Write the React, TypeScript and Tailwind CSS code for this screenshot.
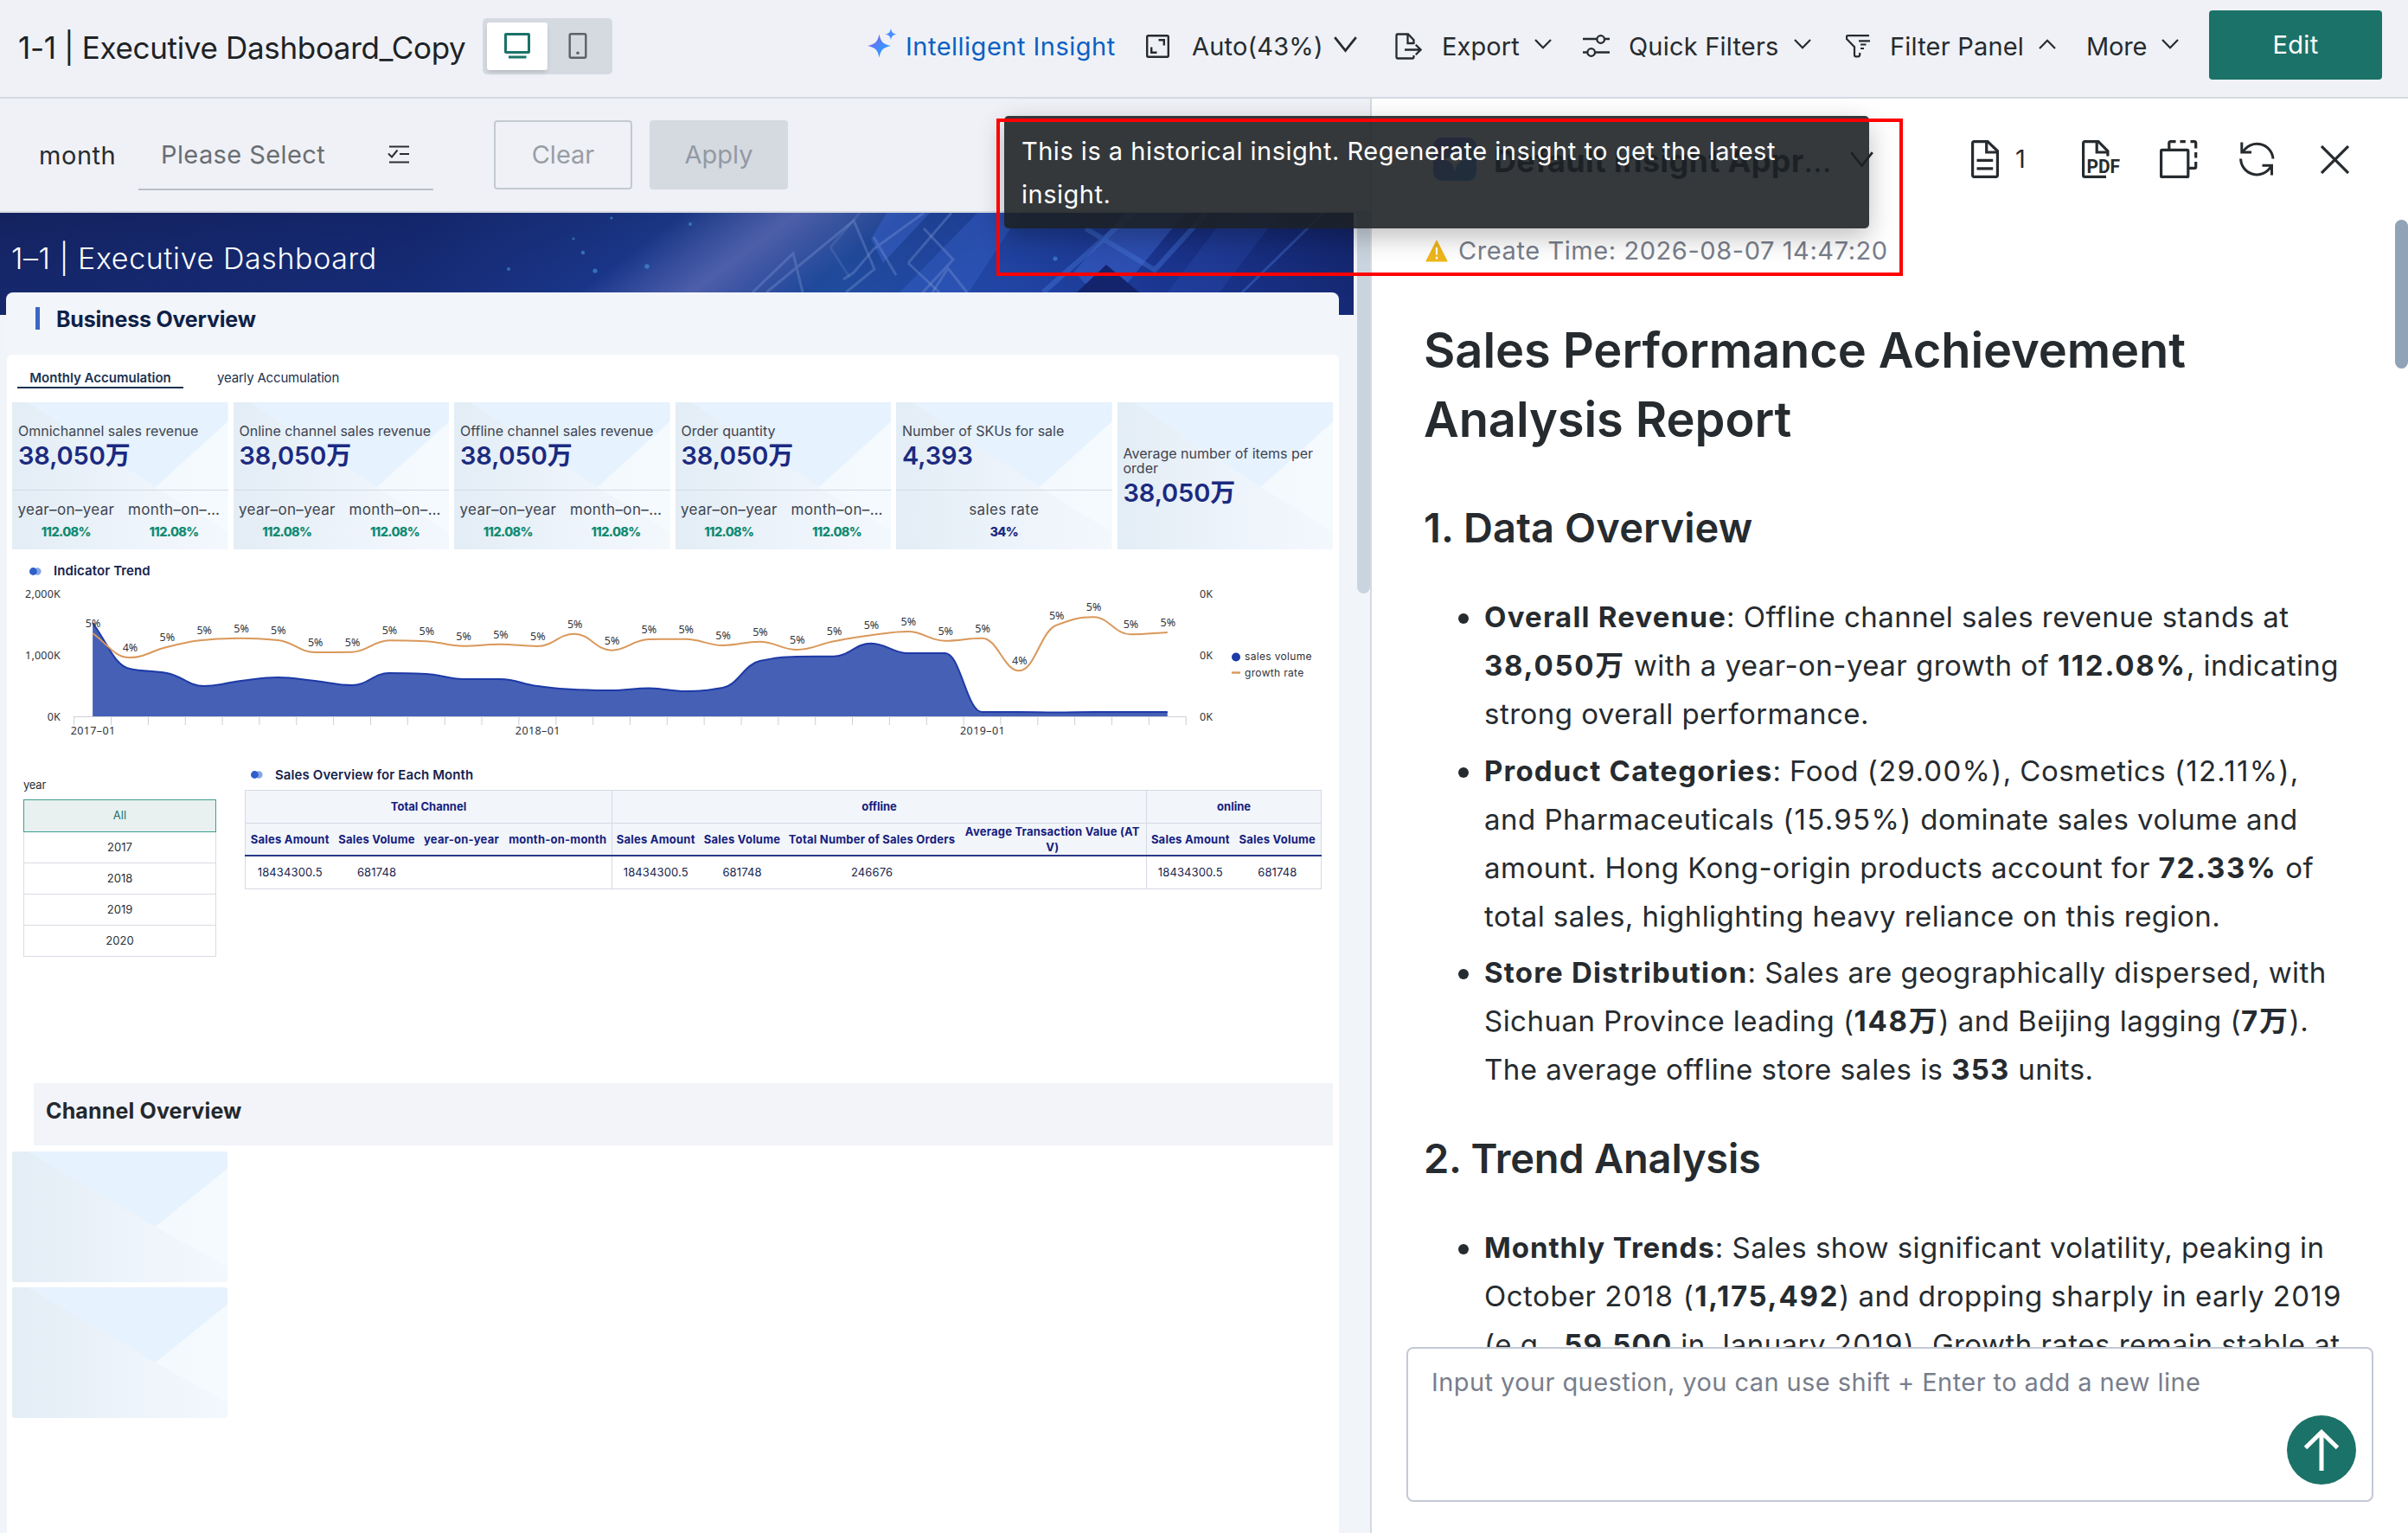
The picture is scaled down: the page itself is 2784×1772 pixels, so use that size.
import React from 'react';
import clsx from 'clsx';

type IconProps = { className?: string };

const Chevron = ({ up, className }: IconProps & { up?: boolean }) => (
  <svg width="20" height="12" viewBox="0 0 20 12" fill="none" stroke="currentColor" strokeWidth="2.2" className={className}>
    <path d={up ? 'M1 11 10 1.8 19 11' : 'M1 1 10 10.2 19 1'} />
  </svg>
);

const BigChevron = ({ className }: IconProps) => (
  <svg width="27" height="19" viewBox="0 0 27 19" fill="none" stroke="currentColor" strokeWidth="2.8" className={className}>
    <path d="M1.2 1.2 13.5 16.6 25.8 1.2" />
  </svg>
);

const MonitorIcon = () => (
  <svg width="30" height="30" viewBox="0 0 30 30" fill="none" stroke="#1b7268" strokeWidth="3">
    <rect x="1.5" y="1.5" width="27" height="21" rx="0.5" />
    <path d="M5 28h20.5" />
  </svg>
);

const PhoneIcon = () => (
  <svg width="22" height="30" viewBox="0 0 22 30" fill="none" stroke="#5d6166" strokeWidth="2.4">
    <rect x="1.7" y="1.2" width="18.6" height="27.6" rx="1.5" />
    <circle cx="11" cy="23.2" r="1.8" fill="#5d6166" stroke="none" />
  </svg>
);

const SparkleIcon = () => (
  <svg width="34" height="34" viewBox="0 0 34 34">
    <defs>
      <linearGradient id="sparkle" x1="0" y1="0" x2="1" y2="1">
        <stop offset="0.2" stopColor="#7b66ee" />
        <stop offset="0.6" stopColor="#3b93ff" />
      </linearGradient>
    </defs>
    <path d="M13.5 6.5C15.5 15.8 18 18 27 20c-9 2-11.500 4.200-13.500 13.500C11.500 24.200 9 22 0 20c9-2 11.500-4.200 13.500-13.500Z" fill="url(#sparkle)" />
    <path d="M27 0c1 4.600 2.400 5.900 7 6.600-4.600.8-6 2.100-7 6.600-1-4.500-2.400-5.800-7-6.600 4.600-.7 6-2 7-6.600Z" fill="#4c8dff" />
  </svg>
);

const FitIcon = () => (
  <svg width="27" height="27" viewBox="0 0 27 27" fill="none" stroke="currentColor" strokeWidth="2.4">
    <rect x="1.2" y="1.2" width="24.6" height="24.6" rx="1.5" />
    <path d="M14.5 6.2h6.3v6.3M12.5 20.8H6.2v-6.3" />
  </svg>
);

const ExportIcon = () => (
  <svg width="31" height="31" viewBox="0 0 31 31" fill="none" stroke="currentColor" strokeWidth="2.3">
    <path d="M21.5 13V8.200L15 1.500H2.800A1.300 1.300 0 0 0 1.500 2.800v25.400a1.300 1.300 0 0 0 1.300 1.300h17.400a1.300 1.300 0 0 0 1.300-1.300V26" />
    <path d="M14.5 1.500V12h7M11 19.500h18M23.800 13.800l5.700 5.700-5.700 5.700" />
  </svg>
);

const SlidersIcon = () => (
  <svg width="32" height="27" viewBox="0 0 32 27" fill="none" stroke="currentColor" strokeWidth="2.3">
    <path d="M0 5h16M25.500 5H31M0 20.500h5M14.500 20.500H31" />
    <circle cx="20.7" cy="5.5" r="4.3" />
    <circle cx="9.7" cy="20.500" r="4.3" />
  </svg>
);

const FilterIcon = () => (
  <svg width="28" height="27" viewBox="0 0 28 27" fill="none" stroke="currentColor" strokeWidth="2.2">
    <path d="M27 1.200H2A1 1 0 0 0 1 2.200V5l9 9.200V23.500a1.800 1.800 0 0 0 1.800 1.800h2.400a2 2 0 0 0 2-2V21" />
    <path d="M15 7.300h13M17 11.500h6.500M17 16h4" />
  </svg>
);

const ChecklistIcon = () => (
  <svg width="26" height="21" viewBox="0 0 26 21" fill="none" stroke="#2b2f33" strokeWidth="2">
    <path d="M2 1.500h23M14 10h11M2 19.500h23M1 9.500l4 4 6.500-8" />
  </svg>
);

const DocIcon = () => (
  <svg width="32" height="44" viewBox="0 0 32 44" fill="none" stroke="currentColor" strokeWidth="3.2">
    <path d="M19 1.600H3.200A1.600 1.600 0 0 0 1.600 3.200v37.600a1.600 1.600 0 0 0 1.600 1.600h25.600a1.600 1.600 0 0 0 1.600-1.600V12.500Z" />
    <path d="M17.700 1.600V14h12.700M6.500 23.300h18.700M6.500 32.800h18.700" />
  </svg>
);

const PdfIcon = () => (
  <svg width="45" height="44" viewBox="0 0 45 44" fill="none" stroke="currentColor" strokeWidth="3.2">
    <path d="M28 42.400H3.200a1.600 1.600 0 0 1-1.600-1.600V3.200a1.600 1.600 0 0 1 1.600-1.600H19l10.900 11V18.500" />
    <path d="M17.200 1.600V14h12.700" />
    <text x="5.5" y="37.5" textLength="38.5" lengthAdjust="spacingAndGlyphs" fill="currentColor" stroke="none" className="font-['Roboto'] text-[21.5px] font-bold">
      PDF
    </text>
  </svg>
);

const CopyIcon = () => (
  <svg width="44" height="44" viewBox="0 0 44 44" fill="none" stroke="currentColor" strokeWidth="3.2">
    <rect x="1.6" y="11.4" width="31.2" height="31" rx="1" />
    <path d="M10.800 10V3A1.400 1.400 0 0 1 12.200 1.600H18.500M23.500 1.600h6.300M35.500 1.600H40.300A1.400 1.400 0 0 1 41.700 3v6.500M41.700 14v6.500M41.700 25v6a1.400 1.400 0 0 1-1.400 1.400H34" />
  </svg>
);

const RefreshIcon = () => (
  <svg width="41" height="42" viewBox="0 0 41 42" fill="none" stroke="currentColor" strokeWidth="3">
    <path d="M39 20.500A18.700 18.700 0 0 0 4.200 12.500M1.600 20.500A18.700 18.700 0 0 0 36.500 29.500" />
    <path d="M2.800 1.500V13H14M26.500 28.200H37.500V39.500" />
  </svg>
);

const CloseIcon = () => (
  <svg width="33" height="33" viewBox="0 0 33 33" fill="none" stroke="currentColor" strokeWidth="3.2">
    <path d="M1 1 32 32M32 1 1 32" />
  </svg>
);

const WarningIcon = () => (
  <svg width="26" height="26" viewBox="0 0 26 26">
    <path d="M13 1 25.200 25H.8Z" fill="#efb61b" stroke="#efb61b" strokeWidth="1" strokeLinejoin="round" />
    <path d="M13 9v8.500M13 19.800v2.600" stroke="#fff" strokeWidth="2.2" />
  </svg>
);

const DotsIcon = () => (
  <svg width="14" height="9" viewBox="0 0 14 9">
    <circle cx="9.3" cy="4.5" r="4.3" fill="#86a5e6" />
    <circle cx="4.4" cy="4.5" r="4.4" fill="#2f5fc9" />
  </svg>
);

/* ---------- top bar ---------- */

const MENU = [
  { icon: <ExportIcon />, label: 'Export', item: 'w-[217px]', text: 'ml-[23px] w-[107px] tracking-[0.1px]' },
  { icon: <SlidersIcon />, label: 'Quick Filters', item: 'w-[304px]', text: 'ml-[21px] w-[191px] tracking-[0.2px]' },
  { icon: <FilterIcon />, label: 'Filter Panel', item: 'w-[278px]', text: 'ml-[23px] w-[172px] tracking-[0.2px]', up: true },
  { icon: null, label: 'More', item: 'w-[142px]', text: 'w-[87px] tracking-[-0.2px]' },
];

const TopBar = () => (
  <header className="flex h-[114px] items-center border-b-2 border-[#d5dae1] bg-[#eff1f6] pb-1.5 pl-[21px]">
    <h1 className="w-[537px] pt-[3px] text-[35px] leading-[50px] tracking-[-0.34px] text-[#1e2225]">1-1 | Executive Dashboard_Copy</h1>
    <div className="flex h-[65px] w-[150px] items-center rounded-[5px] bg-[#d5dae1] pl-[5px]">
      <span className="flex h-[55px] w-[70px] items-center justify-center rounded-[3px] bg-white shadow-md">
        <MonitorIcon />
      </span>
      <span className="flex w-[69px] justify-center">
        <PhoneIcon />
      </span>
    </div>
    <nav className="ml-[295px] flex items-center">
      <a className="flex w-[322px] items-center text-[#0b60c2]">
        <span className="-mt-1.5">
          <SparkleIcon />
        </span>
        <span className="ml-[10px] pt-px tracking-[0.5px]">Intelligent Insight</span>
      </a>
      <a className="flex w-[288px] items-center">
        <FitIcon />
        <span className="ml-[26px] w-[164px] pt-px tracking-[0.2px]">Auto(43%)</span>
        <BigChevron className="-mt-1" />
      </a>
      {MENU.map(({ icon, label, item, text, up }) => (
        <a key={label} className={clsx('flex items-center', item)}>
          {icon}
          <span className={clsx('pt-px', text)}>{label}</span>
          <Chevron up={up} className="-mt-1" />
        </a>
      ))}
      <button className="-mt-0.5 h-20 w-[200px] rounded-[4px] bg-[#1b7268] tracking-[0.3px] text-white">Edit</button>
    </nav>
  </header>
);

const FilterBar = () => (
  <div className="flex h-[132px] items-start border-b-2 border-[#d5dae1] bg-[#eff1f6] pt-[25px]">
    <span className="ml-[45px] w-[115px] pt-[21px] leading-[40px] tracking-[0.55px]">month</span>
    <div className="flex h-[81px] w-[341px] items-start border-b-2 border-[#b9bec4] pl-[26px] pt-[20px]">
      <span className="w-[262px] leading-[40px] tracking-[0.4px] text-[#6a6e73]">Please Select</span>
      <span className="pt-[9px]">
        <ChecklistIcon />
      </span>
    </div>
    <button className="ml-[70px] h-20 w-[160px] rounded-[4px] border-2 border-[#c3cad1] text-[#989ea5]">Clear</button>
    <button className="ml-5 h-20 w-[160px] rounded-[4px] bg-[#d5dae1] text-[#9499a2]">Apply</button>
  </div>
);

/* ---------- dashboard ---------- */

const Banner = () => (
  <svg width="1565" height="118" viewBox="0 0 1565 118" className="absolute left-0 top-0">
    <defs>
      <linearGradient id="sky" x1="0" y1="0" x2="1" y2="0">
        <stop offset="0" stopColor="#152461" />
        <stop offset="0.3" stopColor="#15286e" />
        <stop offset="0.46" stopColor="#1b3888" />
        <stop offset="0.62" stopColor="#22509f" />
        <stop offset="0.74" stopColor="#2348a8" />
        <stop offset="0.86" stopColor="#1b3690" />
        <stop offset="1" stopColor="#14256b" />
      </linearGradient>
      <linearGradient id="fade" x1="0" y1="0" x2="0" y2="1">
        <stop offset="0" stopColor="#0f1c58" stopOpacity="0.25" />
        <stop offset="1" stopColor="#1d3fae" stopOpacity="0.15" />
      </linearGradient>
      <linearGradient id="beam" gradientUnits="userSpaceOnUse" x1="815" y1="-18" x2="909" y2="108">
        <stop offset="0" stopColor="#5a68b4" stopOpacity="0" />
        <stop offset="0.5" stopColor="#5a66b0" stopOpacity="0.8" />
        <stop offset="1" stopColor="#5a68b4" stopOpacity="0" />
      </linearGradient>
    </defs>
    <rect width="1565" height="118" fill="url(#sky)" />
    <rect width="1565" height="118" fill="url(#fade)" />
    <rect width="1565" height="118" fill="url(#beam)" />
    <g fill="#3d66d0" fillOpacity="0.45">
      <path d="M1025 0h50l-54 58-14-28Z" />
      <path d="M1040 92l90-92h50l-60 92Z" fillOpacity="0.35" />
      <path d="M1242 68 1300 0h70l-90 110Z" fillOpacity="0.5" />
      <path d="M1330 118 1420 0h60l-90 118Z" fillOpacity="0.18" />
    </g>
    <path d="M1245 92l34-32 38 32Z" fill="#13236c" />
    <g fill="none" stroke="#7f98d4" strokeOpacity="0.35" strokeWidth="3">
      <path d="M870 92l47-45 11 45M886 92l101-83 24 56-33 27" />
      <path d="M975 77l12-8 23-27 58-42M1010 28l26 44M1050 58l50-58M1050 58l36 34" />
      <path d="M1068 18l34 36-52 56M1078 92l18-28 22 28" />
      <path d="M960 40l34-40M960 40l22 34" strokeOpacity="0.2" />
    </g>
    <g fill="none" stroke="#4a7be0" strokeOpacity="0.38" strokeWidth="6">
      <path d="M1206 92 1310 0M1255 18l80 48 60-66" />
      <path d="M1430 98l100-98" strokeWidth="3" />
    </g>
    <g fill="#4aa0e6" fillOpacity="0.55">
      <circle cx="674" cy="46" r="2.2" />
      <circle cx="688" cy="67" r="2.6" />
      <circle cx="748" cy="62" r="2.8" />
      <circle cx="588" cy="65" r="2" />
      <circle cx="798" cy="13" r="2" />
      <circle cx="707" cy="6" r="1.6" />
      <circle cx="663" cy="30" r="1.5" />
      <circle cx="1220" cy="53" r="2.5" />
    </g>
  </svg>
);

const CardArt = () => (
  <svg viewBox="0 0 250 170" preserveAspectRatio="none" className="absolute inset-0 h-full w-full">
    <defs>
      <linearGradient id="cardBase" x1="0" y1="0" x2="1" y2="0">
        <stop offset="0" stopColor="#e3edf5" />
        <stop offset="0.6" stopColor="#eef4fb" />
        <stop offset="1" stopColor="#f3f8fd" />
      </linearGradient>
    </defs>
    <rect width="250" height="170" fill="url(#cardBase)" />
    <path d="M166 98 250 22V150Z" fill="#f7fbff" fillOpacity="0.6" />
    <path d="M18 0H250V22L166 98Z" fill="#e6f2fd" />
  </svg>
);

type Metric = {
  title: string;
  value: string;
  rates?: { label: string; value: string; dark?: boolean }[];
};

const CHANGES = [
  { label: 'year–on–year', value: '112.08%' },
  { label: 'month–on–…', value: '112.08%' },
];

const METRICS: Metric[] = [
  { title: 'Omnichannel sales revenue', value: '38,050万', rates: CHANGES },
  { title: 'Online channel sales revenue', value: '38,050万', rates: CHANGES },
  { title: 'Offline channel sales revenue', value: '38,050万', rates: CHANGES },
  { title: 'Order quantity', value: '38,050万', rates: CHANGES },
  { title: 'Number of SKUs for sale', value: '4,393', rates: [{ label: 'sales rate', value: '34%', dark: true }] },
  { title: 'Average number of items per order', value: '38,050万' },
];

const MetricCard = ({ title, value, rates }: Metric) => (
  <div className="relative h-[170px] flex-1">
    <CardArt />
    <div className="relative">
      <div className={clsx('px-[7px]', rates ? 'h-[102px] border-b border-[#d3dae4] pt-[23px]' : 'pt-[51px]')}>
        <p className={clsx('text-[16px] text-[#3e4450]', rates ? 'whitespace-nowrap leading-[20px]' : 'leading-[17px]')}>{title}</p>
        <p className={clsx('text-[29px] font-semibold leading-[34px] tracking-[-0.1px] text-[#1b2a80]', rates ? 'mt-[1.5px]' : 'mt-[3px]')}>{value}</p>
      </div>
      {rates && (
        <div className="flex pt-[12px] text-center">
          {rates.map((rate) => (
            <div key={rate.label} className="flex-1 whitespace-nowrap">
              <p className="text-[17px] leading-[20px] tracking-[0.35px] text-[#3e4450]">{rate.label}</p>
              <p className={clsx('mt-[4px] text-[14.5px] font-extrabold leading-[24px] tracking-[-0.6px]', rate.dark ? 'text-[#1b2a80]' : 'text-[#118a70]')}>
                {rate.value}
              </p>
            </div>
          ))}
        </div>
      )}
    </div>
  </div>
);

const AXIS_Y = 828;
const AXIS_X = 85.7;
const STEP = 42.85;
const VOLUME = [720, 773, 778, 793, 787, 783, 787, 792, 778, 779, 785, 785, 793, 797, 798, 795.5, 799, 795, 764, 759, 758.7, 743.7, 755, 755, 823, 823, 823.5, 823, 823, 823];
const GROWTH = [732, 760, 748, 739.7, 737.7, 740, 754, 753.7, 740.3, 741.3, 746.7, 744.7, 747, 732.7, 751.7, 739, 738.7, 746, 741.7, 751, 741.3, 734.3, 730, 740.7, 737.7, 775.3, 722.7, 713.3, 733.3, 731];
const pointX = (i: number) => AXIS_X + STEP * (i + 0.5);

// Cubic through every point, flat at local extremes.
const smooth = (ys: number[]) => {
  const slope = ys.map((y, i) => {
    const prev = ys[i - 1];
    const next = ys[i + 1];
    if (prev === undefined) return (next - y) * 1.1;
    if (next === undefined) return y - prev;
    const a = y - prev;
    const b = next - y;
    return a * b <= 0 ? 0 : (2 * a * b) / (a + b);
  });
  return ys
    .map((y, i) =>
      i === 0
        ? `M${pointX(0)} ${y}`
        : `C${pointX(i - 1) + STEP / 2.4} ${ys[i - 1] + slope[i - 1] / 2.4} ${pointX(i) - STEP / 2.4} ${y - slope[i] / 2.4} ${pointX(i)} ${y}`,
    )
    .join('');
};

const TrendChart = () => {
  const volumePath = smooth(VOLUME);
  return (
    <svg width="1540" height="190" viewBox="8 670 1540 190" className="block font-['Noto_Sans'] text-[12.5px]" fill="#2e3238">
      {['2,000K', '1,000K', '0K'].map((label, i) => (
        <React.Fragment key={label}>
          <text x="70" y={691 + i * 71} textAnchor="end" letterSpacing="0.2">{label}</text>
          <text x="1387" y={691 + i * 71}>0K</text>
        </React.Fragment>
      ))}
      <path d={`M${AXIS_X} ${AXIS_Y + 0.5}H1371`} stroke="#ccd0d6" />
      {Array.from({ length: 31 }, (_, i) => (
        <path key={i} d={`M${AXIS_X + STEP * i} ${AXIS_Y}v10`} stroke="#ccd0d6" />
      ))}
      <path d={`${volumePath}V${AXIS_Y}H${pointX(0)}Z`} fill="#4660b6" />
      <path d={volumePath} fill="none" stroke="#1d3aa6" strokeWidth="2" />
      <path d={smooth(GROWTH)} fill="none" stroke="#d9985a" strokeWidth="2" />
      {GROWTH.map((y, i) => (
        <text key={i} x={pointX(i) + 0.5} y={y - 7} textAnchor="middle">{i === 1 || i === 25 ? '4%' : '5%'}</text>
      ))}
      {['2017–01', '2018–01', '2019–01'].map((label, i) => (
        <text key={label} x={pointX(i * 12) + 0.5} y="849" textAnchor="middle" letterSpacing="0.4">{label}</text>
      ))}
      <circle cx="1429" cy="759.5" r="5" fill="#1d3aa6" />
      <path d="M1424 777.500h10" stroke="#d9985a" strokeWidth="2.4" />
      <g className="font-['Inter'] text-[12px]" letterSpacing="0.33">
        <text x="1439" y="763">sales volume</text>
        <text x="1439" y="782">growth rate</text>
      </g>
    </svg>
  );
};

const BlockTitle = ({ children, className }: { children: React.ReactNode; className?: string }) => (
  <h3 className={clsx('flex items-center text-[15px] font-semibold leading-[20px] tracking-[0.1px] text-[#14234c]', className)}>
    <DotsIcon />
    <span className="ml-[14px]">{children}</span>
  </h3>
);

const YearList = () => (
  <div className="ml-[19px] w-[223px] pt-[38px] text-[13px] text-[#2b3036]">
    <p className="leading-[18px] tracking-[-0.2px]">year</p>
    <ul className="mt-[8px] text-center">
      <li className="h-[38px] border border-[#3f9c90] bg-[#e8f1f0] leading-[35px] text-[#1b7268]">All</li>
      {['2017', '2018', '2019', '2020'].map((year) => (
        <li key={year} className="h-[36px] border-x border-b border-[#d9dce4] leading-[34px]">{year}</li>
      ))}
    </ul>
  </div>
);

const COLUMNS = [
  { name: 'Sales Amount', value: '18434300.5' },
  { name: 'Sales Volume', value: '681748' },
  { name: 'year-on-year', value: '' },
  { name: 'month-on-month', value: '', last: true },
  { name: 'Sales Amount', value: '18434300.5' },
  { name: 'Sales Volume', value: '681748' },
  { name: 'Total Number of Sales Orders', value: '246676' },
  { name: 'Average Transaction Value (ATV)', value: '', last: true },
  { name: 'Sales Amount', value: '18434300.5' },
  { name: 'Sales Volume', value: '681748', last: true },
];

const SalesTable = () => (
  <div className="ml-[33px] pt-[25.5px]">
    <BlockTitle className="pl-[7px]">Sales Overview for Each Month</BlockTitle>
    <table className="mt-[7.5px] w-[1244px] table-fixed border-collapse border border-[#d5d9e3] text-center text-[13px]">
      <colgroup>
        <col className="w-[103px]" />
        <col className="w-[98px]" />
        <col className="w-[98px]" />
        <col className="w-[125px]" />
        <col className="w-[101px]" />
        <col className="w-[99px]" />
        <col className="w-[201px]" />
        <col className="w-[217px]" />
        <col className="w-[101px]" />
        <col className="w-[101px]" />
      </colgroup>
      <thead className="bg-[#f2f5fa] font-bold text-[#15207d]">
        <tr className="h-[38px] border-b border-[#d5d9e3]">
          <th colSpan={4} className="border-r border-[#d5d9e3] p-0">Total Channel</th>
          <th colSpan={4} className="border-r border-[#d5d9e3] p-0">offline</th>
          <th colSpan={2} className="p-0">online</th>
        </tr>
        <tr className="h-[37px] border-b-2 border-[#2b3789]">
          {COLUMNS.map(({ name, last }, i) => (
            <th key={i} className={clsx('p-0 leading-[18px] tracking-[0.22px]', last && 'border-r border-r-[#d5d9e3]')}>
              {name.startsWith('Average') ? <>Average Transaction Value (AT<br />V)</> : <span className="whitespace-nowrap">{name}</span>}
            </th>
          ))}
        </tr>
      </thead>
      <tbody className="text-[#17244d]">
        <tr className="h-[38px]">
          {COLUMNS.map(({ value, last }, i) => (
            <td key={i} className={clsx('p-0 tracking-[0.13px]', last && 'border-r border-r-[#d5d9e3]')}>{value}</td>
          ))}
        </tr>
      </tbody>
    </table>
  </div>
);

const Dashboard = () => (
  <section className="relative w-[1569px] overflow-hidden bg-[#f1f5fa]">
    <Banner />
    <div className="relative flex h-full flex-col">
      <h2 className="h-[92px] pl-[13px] pt-[35px] text-[34px] font-light leading-[36px] tracking-[0.6px] text-white">1–1 | Executive Dashboard</h2>
      <div className="ml-[7px] flex h-[72px] w-[1541px] items-start rounded-t-[8px] bg-[#f2f5fa] pl-[34px] pt-[17px]">
        <i className="h-[26px] w-[5px] bg-[#3a66c4]" />
        <h3 className="ml-[19px] text-[25px] font-bold leading-[28px] tracking-[-0.2px] text-[#0f2147]">Business Overview</h3>
      </div>
      <div className="ml-2 w-[1540px] flex-1 rounded-t-[6px] bg-white">
        <div className="flex pl-3 pt-[17px] text-[15px] leading-[20px] text-[#1c3350]">
          <span className="w-[192px] border-b-2 border-[#1c3350] text-center font-semibold">Monthly Accumulation</span>
          <span className="ml-[39px] tracking-[-0.18px]">yearly Accumulation</span>
        </div>
        <div className="ml-1.5 mt-4 flex w-[1527px] gap-1.5">
          {METRICS.map((metric) => (
            <MetricCard key={metric.title} {...metric} />
          ))}
        </div>
        <BlockTitle className="mt-[15px] pl-[26px]">Indicator Trend</BlockTitle>
        <TrendChart />
        <div className="flex h-[392px] items-start">
          <YearList />
          <SalesTable />
        </div>
        <div className="ml-[31px] flex h-[72px] w-[1502px] items-center bg-[#f3f4f9] pb-1.5 pl-[14px]">
          <h3 className="text-[25px] font-bold tracking-[0.15px] text-[#23282d]">Channel Overview</h3>
        </div>
        <div className="ml-1.5 mt-[7px] flex w-[249px] flex-col gap-1.5">
          <div className="relative h-[151px] overflow-hidden rounded-[3px]">
            <CardArt />
          </div>
          <div className="relative h-[151px] overflow-hidden rounded-[3px]">
            <CardArt />
          </div>
        </div>
      </div>
    </div>
  </section>
);

/* ---------- insight panel ---------- */

const B = ({ children }: { children: React.ReactNode }) => <b className="font-bold tracking-[1.2px]">{children}</b>;

// Figures are set a little wider than the words around them.
const Num = ({ bold, children }: { bold?: boolean; children: React.ReactNode }) => (
  <span className={bold ? 'font-bold tracking-[1.75px]' : 'tracking-[1.3px]'}>{children}</span>
);

const Heading = ({ children, className }: { children: React.ReactNode; className?: string }) => (
  <h2 className={clsx('text-[47px] font-semibold leading-[64px]', className)}>{children}</h2>
);

const Point = ({ children }: { children: React.ReactNode }) => (
  <li className="flex">
    <i className="ml-[40px] mr-[18px] mt-[24px] size-3 shrink-0 rounded-full bg-[#262b2f]" />
    <p className="whitespace-nowrap">{children}</p>
  </li>
);

const Report = () => (
  <article className="h-[1247px] overflow-hidden pl-[60px] text-[33px] leading-[56px] tracking-[0.47px]">
    <h1 className="mt-[55px] text-[56px] font-semibold leading-[80px] tracking-[-0.08px]">
      Sales Performance Achievement
      <br />
      Analysis Report
    </h1>
    <Heading className="mt-[53px] tracking-[0.1px]">1. Data Overview</Heading>
    <ul className="mt-[43px] flex flex-col gap-[9.5px]">
      <Point>
        <B>Overall Revenue</B>: Offline channel sales revenue stands at
        <br />
        <Num bold>38,050万</Num> with a year-on-year growth of <Num bold>112.08%</Num>, indicating
        <br />
        strong overall performance.
      </Point>
      <Point>
        <B>Product Categories</B>: Food <Num>(29.00%)</Num>, Cosmetics <Num>(12.11%)</Num>,
        <br />
        and Pharmaceuticals <Num>(15.95%)</Num> dominate sales volume and
        <br />
        amount. Hong Kong-origin products account for <Num bold>72.33%</Num> of
        <br />
        total sales, highlighting heavy reliance on this region.
      </Point>
      <Point>
        <B>Store Distribution</B>: Sales are geographically dispersed, with
        <br />
        Sichuan Province leading (<Num bold>148万</Num>) and Beijing lagging (<Num bold>7万</Num>).
        <br />
        The average offline store sales is <B>353</B> units.
      </Point>
    </ul>
    <Heading className="mt-[43px] tracking-[-0.2px]">2. Trend Analysis</Heading>
    <ul className="mt-[43px]">
      <Point>
        <b className="font-bold tracking-[0.95px]">Monthly Trends</b>: Sales show significant volatility, peaking in
        <br />
        October <Num>2018 (</Num>
        <Num bold>1,175,492</Num>) and dropping sharply in early <Num>2019</Num>
        <br />
        (e.g., <B>59,500</B> in January <Num>2019)</Num>. Growth rates remain stable at
      </Point>
    </ul>
  </article>
);

const InsightPanel = () => (
  <aside className="relative w-[1200px] border-l-2 border-[#d5dae1] bg-white">
    <div className="flex h-[95px] items-center pl-[71px] pt-[45px]">
      <span className="flex size-[50px] items-center justify-center rounded-[10px] bg-linear-to-br from-[#7a5cf0] to-[#22a6f0]">
        <svg width="34" height="34" viewBox="0 0 34 34" fill="#fff">
          <path d="M17 2c2 10 4.500 13 15 15-10.500 2-13 5-15 15-2-10-4.500-13-15-15C12.500 15 15 12 17 2Z" />
        </svg>
      </span>
      <h2 className="ml-[20px] w-[412px] pt-1 text-[36px] font-bold tracking-[0.3px]">
        Default Insight Appr<span className="font-normal">...</span>
      </h2>
      <BigChevron />
      <div className="ml-[113px] flex items-center">
        <DocIcon />
        <span className="ml-[19px] w-[77px]">1</span>
        <PdfIcon />
        <span className="ml-[45px]">
          <CopyIcon />
        </span>
        <span className="ml-[48px]">
          <RefreshIcon />
        </span>
        <span className="ml-[53px]">
          <CloseIcon />
        </span>
      </div>
    </div>
    <p className="mt-[61px] flex items-center pl-[62px] leading-[40px] tracking-[0.58px] text-[#787e8b]">
      <WarningIcon />
      <span className="ml-[12px]">Create Time: 2026-08-07 14:47:20</span>
    </p>
    <Report />
    <div className="relative ml-[40px] flex h-[179px] w-[1118px] flex-col justify-between rounded-[8px] border-2 border-[#c3c9d4] bg-white pb-[18px] pl-[27px] pr-[18px] pt-[19px]">
      <span className="leading-[40px] tracking-[0.42px] text-[#787e8b]">Input your question, you can use shift + Enter to add a new line</span>
      <button className="flex size-20 items-center justify-center self-end rounded-full bg-[#1b7268]">
        <svg width="42" height="48" viewBox="0 0 42 48" fill="none" stroke="#fff" strokeWidth="5">
          <path d="M21 48V4M2.500 21.500 21 3.500 39.500 21.500" />
        </svg>
      </button>
    </div>
    <i className="absolute right-0 top-[140px] h-[172px] w-[15px] rounded-full bg-[#91a3b7]" />
  </aside>
);

const App = () => (
  <div className="relative flex h-[1772px] w-[2784px] flex-col overflow-hidden bg-white font-['Inter','Noto_Sans_CJK_SC',sans-serif] text-[29px] text-[#262b2f]">
    <TopBar />
    <main className="flex flex-1">
      <div className="flex w-[1584px] flex-col">
        <FilterBar />
        <div className="flex flex-1 bg-[#f1f5fa]">
          <Dashboard />
          <i className="h-[440px] w-[15px] rounded-b-full bg-[#cad4de]" />
        </div>
      </div>
      <InsightPanel />
    </main>
    <div className="absolute left-[1161px] top-[134px] h-[130px] w-[1000px] rounded-[5px] bg-[#1c2124]/89 pl-[20px] pt-[16px] leading-[50px] tracking-[0.5px] text-white shadow-[0_10px_30px_rgba(0,0,0,0.25)]">
      This is a historical insight. Regenerate insight to get the latest
      <br />
      insight.
    </div>
    <div className="absolute left-[1152px] top-[137px] h-[182px] w-[1048px] border-4 border-[#ff0000]" />
  </div>
);

export default App;
